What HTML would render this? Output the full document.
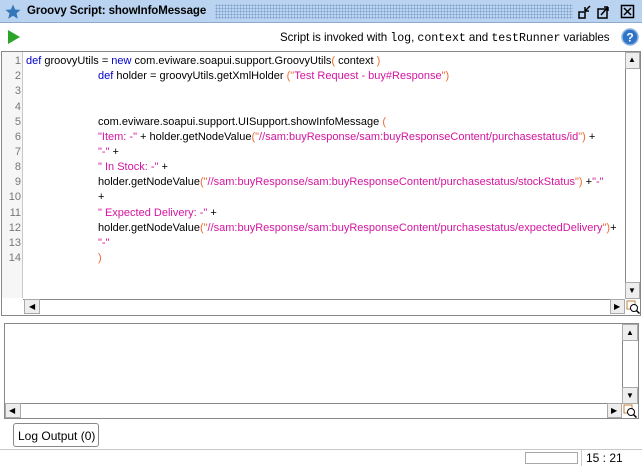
<!DOCTYPE html>
<html><head><style>
*{margin:0;padding:0;box-sizing:border-box}
body{width:642px;height:467px;background:#fff;font-family:"Liberation Sans",sans-serif;font-size:11px;position:relative;overflow:hidden}
.abs{position:absolute}
.title{left:0;top:0;width:642px;height:23px;background:#b9d3f1;border-bottom:1px solid #8da9cc}
.dots{left:215px;top:4px;width:358px;height:15px;background-image:radial-gradient(#7f9fca 0.8px,transparent 0.9px);background-size:3px 3px}
.tb{left:0;top:24px;width:642px;height:27px;background:#fff}
.ed{left:1px;top:51px;width:640px;height:265px;border:1px solid #888}
.gut{left:2px;top:52px;width:21px;height:246px;background:#f6f6f6;border-right:1px solid #c8c8c8}
.ln{position:absolute;left:2px;width:19px;text-align:right;color:#777;font-size:11px}
.code{position:absolute;left:26px;white-space:pre;font-size:11px;color:#000}
.k{color:#0000cc}.s{color:#d4149f}.p{color:#f06a30}
.sb{background:#eee;border:1px solid #aaa}
.arr{position:absolute;font-size:8px;color:#000}
</style></head><body>
<div class="abs title"></div>
<svg class="abs" style="left:5px;top:4px" width="16" height="16" viewBox="0 0 16 16"><path d="M8 0.5l2.2 5 5.3.4-4 3.5 1.3 5.3L8 11.8 3.2 14.7 4.5 9.4 0.5 5.9l5.3-.4z" fill="#3577b8"/></svg>
<div class="abs" style="left:27px;top:5px;font-weight:bold;font-size:11.5px;letter-spacing:-0.1px;color:#000">Groovy Script: showInfoMessage</div>
<div class="abs dots"></div>
<svg class="abs" style="left:577px;top:4px" width="60" height="16"><g stroke="#000" fill="none" stroke-width="1.5"><rect x="2" y="8" width="6" height="6"/><path d="M8 7l5-5M8 7h4M8 7v-4"/><rect x="21" y="5" width="9" height="9"/><path d="M24 11l7-8M31 3h-4M31 3v4"/><rect x="44.5" y="1.5" width="12" height="12"/><path d="M47 4l7 7M54 4l-7 7"/></g></svg>
<div class="abs tb"></div>
<svg class="abs" style="left:7px;top:29px" width="14" height="16"><path d="M1 1l12 7-12 7z" fill="#2aa52a"/></svg>
<div class="abs" style="left:280px;top:31px;font-size:11.6px;letter-spacing:-0.05px">Script is invoked with <span style="font-family:'Liberation Mono',monospace">log</span>, <span style="font-family:'Liberation Mono',monospace">context</span> and <span style="font-family:'Liberation Mono',monospace">testRunner</span> variables</div>
<svg class="abs" style="left:621px;top:28px" width="18" height="18"><circle cx="9" cy="9" r="8" fill="#2f74c8" stroke="#8fb4e0" stroke-width="1.5"/><text x="9" y="13.5" font-size="12" font-weight="bold" fill="#fff" text-anchor="middle" font-family="Liberation Sans">?</text></svg>
<div class="abs ed"></div>
<div class="abs gut"></div>
<div class="abs" style="left:0;top:54px;width:625px;height:245px">
<div class="ln" style="top:1px">1</div><div class="ln" style="top:16px">2</div><div class="ln" style="top:31px">3</div><div class="ln" style="top:47px">4</div><div class="ln" style="top:62px">5</div><div class="ln" style="top:77px">6</div><div class="ln" style="top:92px">7</div><div class="ln" style="top:107px">8</div><div class="ln" style="top:122px">9</div><div class="ln" style="top:137px">10</div><div class="ln" style="top:153px">11</div><div class="ln" style="top:168px">12</div><div class="ln" style="top:183px">13</div><div class="ln" style="top:198px">14</div>
<div class="code" style="top:1px"><span class="k">def</span> groovyUtils = <span class="k">new</span> com.eviware.soapui.support.GroovyUtils<span class="p">(</span> context <span class="p">)</span></div>
<div class="code" style="top:16px;left:98px"><span class="k">def</span> holder = groovyUtils.getXmlHolder <span class="p">("</span><span class="s">Test Request - buy#Response</span><span class="p">")</span></div>
<div class="code" style="top:62px;left:98px">com.eviware.soapui.support.UISupport.showInfoMessage <span class="p">(</span></div>
<div class="code" style="top:77px;left:98px"><span class="s">"Item: -"</span> + holder.getNodeValue<span class="p">("</span><span class="s">//sam:buyResponse/sam:buyResponseContent/purchasestatus/id</span><span class="p">")</span> +</div>
<div class="code" style="top:92px;left:98px"><span class="s">"-"</span> +</div>
<div class="code" style="top:107px;left:98px"><span class="s">" In Stock: -"</span> +</div>
<div class="code" style="top:122px;left:98px">holder.getNodeValue<span class="p">("</span><span class="s">//sam:buyResponse/sam:buyResponseContent/purchasestatus/stockStatus</span><span class="p">")</span> +<span class="s">"-"</span></div>
<div class="code" style="top:137px;left:98px">+</div>
<div class="code" style="top:153px;left:98px"><span class="s">" Expected Delivery: -"</span> +</div>
<div class="code" style="top:168px;left:98px">holder.getNodeValue<span class="p">("</span><span class="s">//sam:buyResponse/sam:buyResponseContent/purchasestatus/expectedDelivery</span><span class="p">")</span>+</div>
<div class="code" style="top:183px;left:98px"><span class="s">"-"</span></div>
<div class="code" style="top:198px;left:98px"><span class="p">)</span></div>
</div>
<div class="abs" style="left:625px;top:52px;width:15px;height:247px;background:#fff;border-left:1px solid #888"></div>
<div class="abs sb" style="left:625px;top:52px;width:15px;height:17px"></div><div class="arr" style="left:628px;top:55px">▲</div>
<div class="abs sb" style="left:625px;top:282px;width:15px;height:17px"></div><div class="arr" style="left:628px;top:286px">▼</div>
<div class="abs" style="left:23px;top:299px;width:602px;height:16px;background:#fff;border-top:1px solid #888"></div>
<div class="abs sb" style="left:24px;top:299px;width:16px;height:15px"></div><div class="arr" style="left:29px;top:302px">◀</div>
<div class="abs sb" style="left:610px;top:299px;width:15px;height:15px"></div><div class="arr" style="left:614px;top:302px">▶</div>
<svg class="abs" style="left:626px;top:300px" width="14" height="14"><rect x="1" y="1" width="8" height="8" fill="none" stroke="#c0803a"/><circle cx="8" cy="8" r="3.5" fill="#fff" stroke="#000"/><path d="M10.5 10.5l3 3" stroke="#000" stroke-width="1.5"/></svg>
<div class="abs" style="left:4px;top:323px;width:635px;height:96px;border:1px solid #888"></div>
<div class="abs" style="left:622px;top:324px;width:16px;height:80px;border-left:1px solid #888;background:#fff"></div>
<div class="abs sb" style="left:622px;top:324px;width:16px;height:17px"></div><div class="arr" style="left:626px;top:328px">▲</div>
<div class="abs sb" style="left:622px;top:387px;width:16px;height:17px"></div><div class="arr" style="left:626px;top:391px">▼</div>
<div class="abs" style="left:5px;top:403px;width:617px;height:15px;border-top:1px solid #888"></div>
<div class="abs sb" style="left:5px;top:403px;width:16px;height:15px"></div><div class="arr" style="left:9px;top:406px">◀</div>
<div class="abs sb" style="left:607px;top:403px;width:15px;height:15px"></div><div class="arr" style="left:611px;top:406px">▶</div>
<svg class="abs" style="left:623px;top:404px" width="14" height="14"><rect x="1" y="1" width="8" height="8" fill="none" stroke="#c0803a"/><circle cx="8" cy="8" r="3.5" fill="#fff" stroke="#000"/><path d="M10.5 10.5l3 3" stroke="#000" stroke-width="1.5"/></svg>
<div class="abs" style="left:13px;top:423px;width:86px;height:24px;border:1px solid #888;border-radius:3px;font-size:12px;padding:5px 0 0 4px">Log Output (0)</div>
<div class="abs" style="left:0;top:449px;width:642px;height:18px;border-top:1px solid #c8c8c8"></div>
<div class="abs" style="left:525px;top:452px;width:53px;height:12px;border:1px solid #aaa"></div>
<div class="abs" style="left:581px;top:450px;width:1px;height:16px;background:#ccc"></div>
<div class="abs" style="left:586px;top:451px;font-size:12px">15 : 21</div>
</body></html>
